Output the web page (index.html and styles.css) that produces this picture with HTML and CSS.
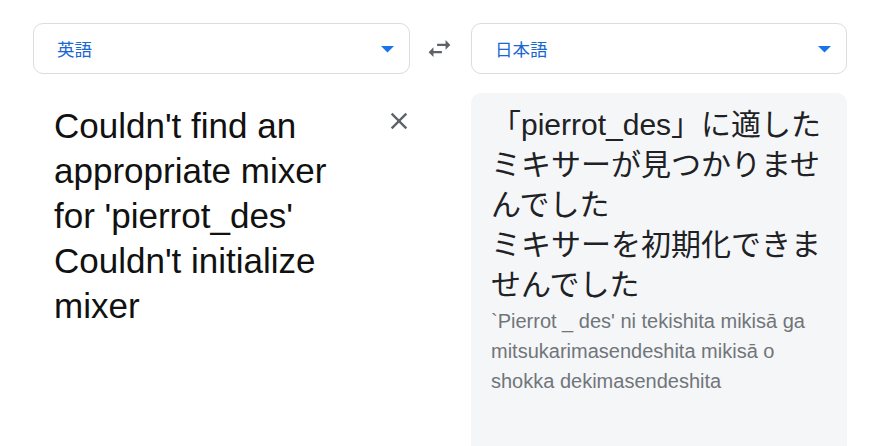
FILE: index.html
```html
<!DOCTYPE html>
<html lang="ja">
<head>
<meta charset="utf-8">
<title>Translate</title>
<link rel="stylesheet" href="styles.css">
</head>
<body>
<div class="app">
  <div class="lang-select">
    <span class="lang-label">英語</span>
    <svg class="drop" width="13" height="7" viewBox="0 0 13 7"><path d="M0 0h13L6.5 6.5z" fill="#1a73e8"/></svg>
  </div>
  <div class="swap">
    <svg width="29" height="29" viewBox="0 0 24 24"><path d="M6.99 11L3 15l3.99 4v-3H14v-2H6.99v-3zM21 9l-3.99-4v3H10v2h7.01v3L21 9z" fill="#5f6368"/></svg>
  </div>
  <div class="lang-select">
    <span class="lang-label">日本語</span>
    <svg class="drop" width="13" height="7" viewBox="0 0 13 7"><path d="M0 0h13L6.5 6.5z" fill="#1a73e8"/></svg>
  </div>

  <div class="source">
    <div class="src-text">Couldn't find an appropriate mixer for 'pierrot_des'
Couldn't initialize mixer</div>
    <button class="clear" aria-label="クリア">
      <svg width="28" height="28" viewBox="0 0 24 24"><path d="M19 6.41L17.59 5 12 10.59 6.41 5 5 6.41 10.59 12 5 17.59 6.41 19 12 13.41 17.59 19 19 17.59 13.41 12z" fill="#5f6368"/></svg>
    </button>
  </div>
  <div class="spacer"></div>
  <div class="target">
    <div class="tgt-text">「pierrot_des」に適したミキサーが見つかりませんでした<br>ミキサーを初期化できませんでした</div>
    <div class="roman">`Pierrot _ des' ni tekishita mikisā ga mitsukarimasendeshita mikisā o shokka dekimasendeshita</div>
  </div>
</div>
</body>
</html>
```

FILE: styles.css
```css
html, body {
  margin: 0;
  padding: 0;
  background: #ffffff;
}

body {
  font-family: "Liberation Sans", Arial, "Noto Sans CJK JP", sans-serif;
  color: #202124;
  overflow: hidden;
}

.app {
  display: grid;
  grid-template-columns: 377px 61px 376px;
  row-gap: 19px;
  padding: 23px 0 0 33px;
}

.lang-select {
  box-sizing: border-box;
  height: 51px;
  border: 1px solid #dadce0;
  border-radius: 10px;
  display: flex;
  align-items: center;
  justify-content: space-between;
  padding: 0 15px 0 23px;
}

.lang-label {
  font-family: "Noto Sans CJK JP", sans-serif;
  font-size: 17.5px;
  color: #1967d2;
}

.drop {
  display: block;
  margin-top: 2px;
}

.swap {
  display: flex;
  align-items: center;
  justify-content: center;
  padding-right: 3px;
}

.swap svg {
  display: block;
}

.source {
  display: flex;
  justify-content: space-between;
  align-items: flex-start;
  padding: 10px 0 0 21px;
}

.src-text {
  width: 300px;
  font-size: 35px;
  line-height: 45px;
  color: #111111;
  white-space: pre-line;
}

.clear {
  border: 0;
  background: none;
  padding: 0;
  margin: 4px -3px 0 0;
  cursor: pointer;
}

.clear svg {
  display: block;
}

.target {
  background: #f5f6f8;
  border-radius: 10px 10px 0 0;
  padding: 12px 20px 0 20px;
  height: 360px;
}

.tgt-text {
  font-size: 30px;
  line-height: 40px;
  color: #202124;
}

.roman {
  font-size: 20px;
  line-height: 30px;
  color: #70757a;
  margin-top: 1px;
}
```
